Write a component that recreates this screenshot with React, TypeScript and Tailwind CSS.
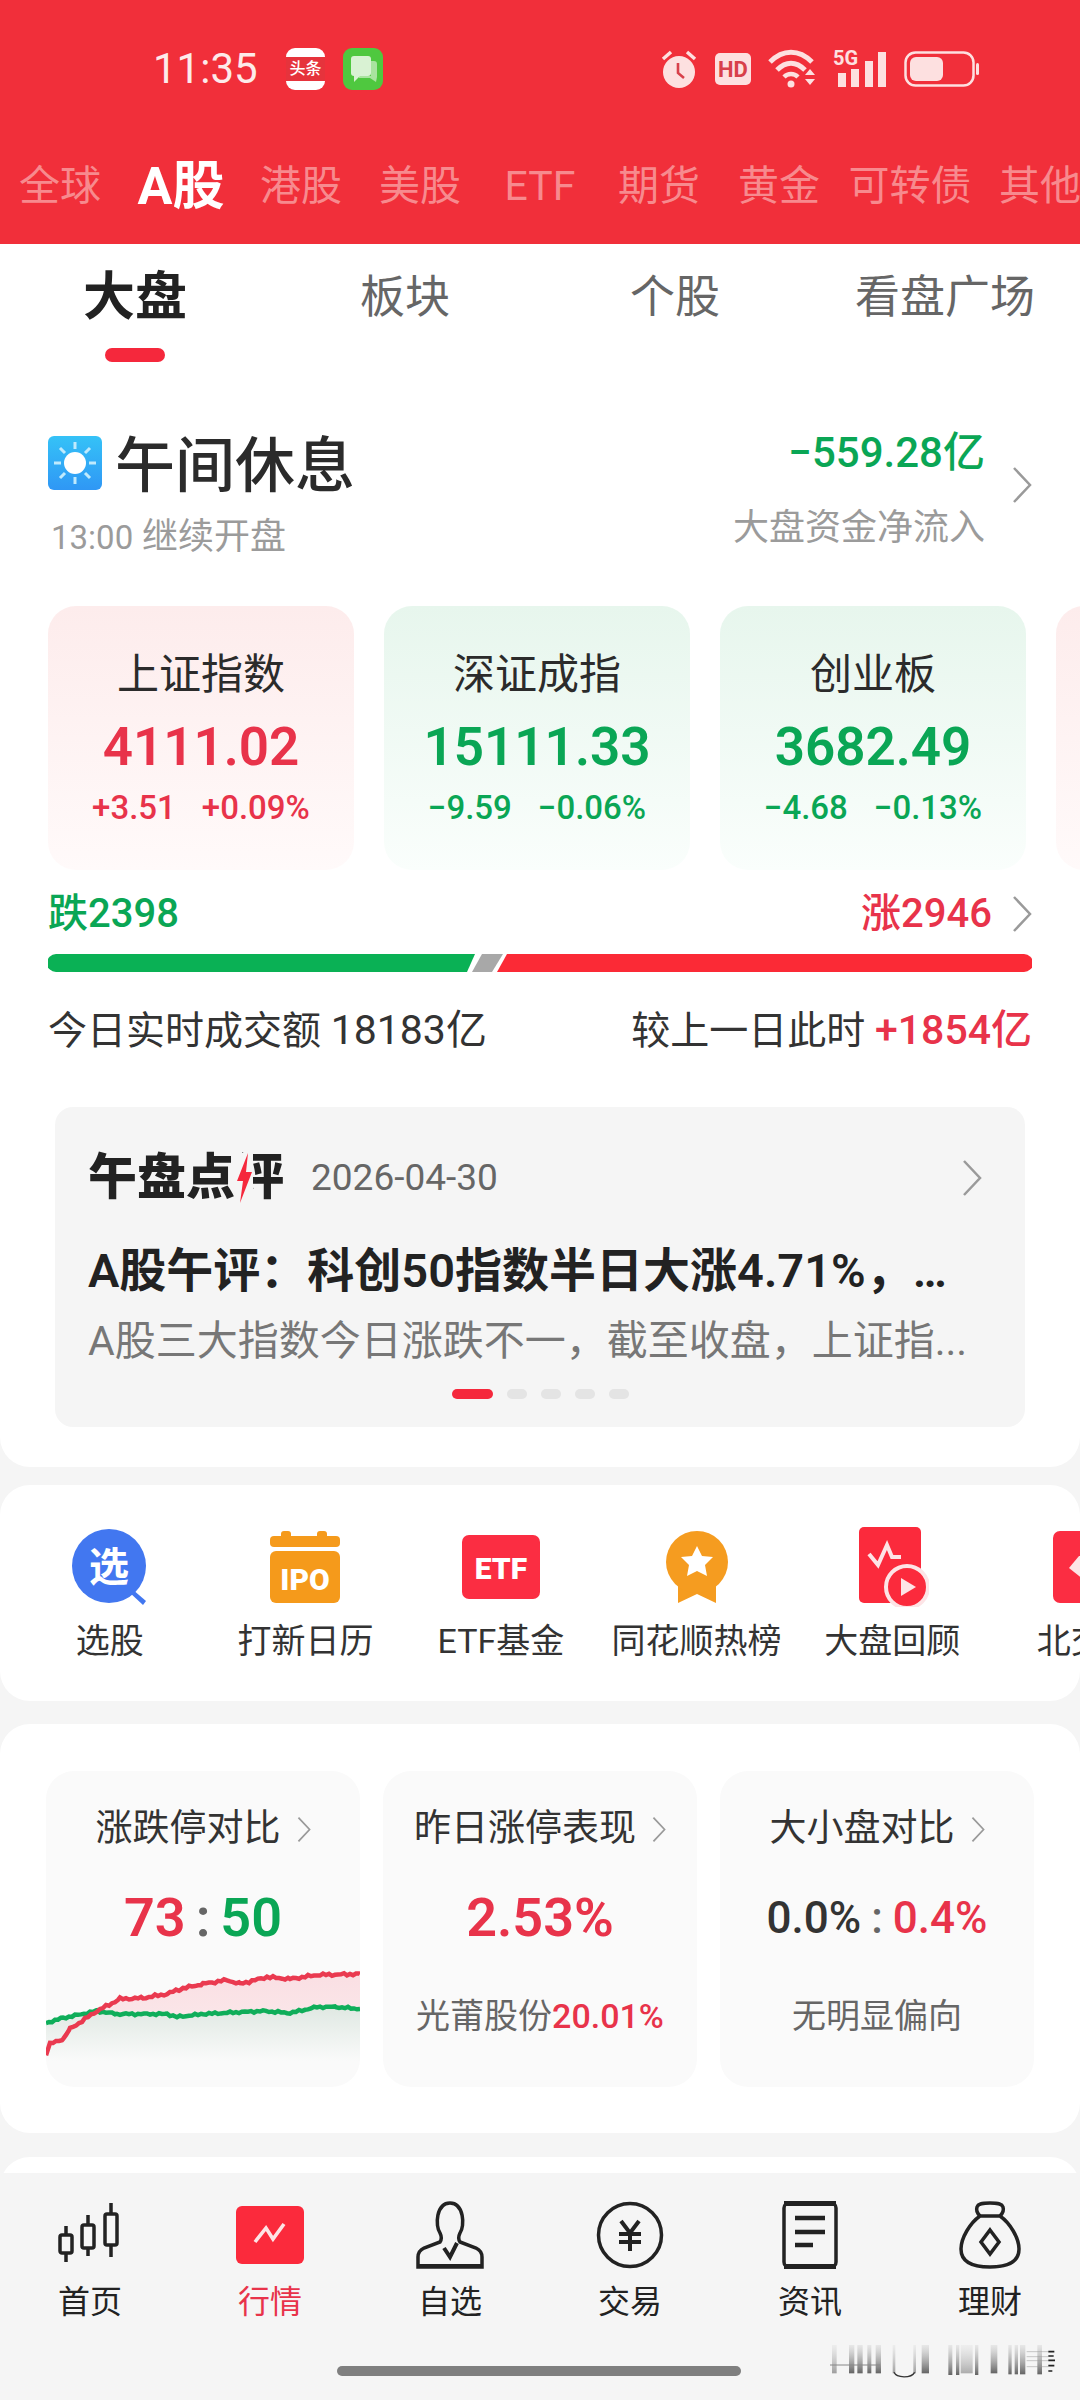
import React from "react";

const RED = "#e8334a";
const GREEN = "#0aa655";

const Chevron = ({ className = "" }: { className?: string }) => (
  <svg viewBox="0 0 20 36" className={className} fill="none" stroke="#9a9a9a" strokeWidth="2.5">
    <path d="M2 1l16 17L2 35" />
  </svg>
);

// status bar
const StatusIcons = () => (
  <div className="flex items-center ml-auto pr-[100px]">
    <svg viewBox="0 0 36 40" className="w-[36px] h-[40px]">
      <circle cx="18" cy="23" r="16" fill="#fde0e0" />
      <path d="M17 14v10l6 5" stroke="#d8404a" strokeWidth="2.6" fill="none" />
      <path d="M2 10l8-7M34 10l-8-7" stroke="#fde0e0" strokeWidth="3.5" />
    </svg>
    <svg viewBox="0 0 36 32" className="w-[36px] h-[32px] ml-[18px]">
      <rect width="36" height="32" rx="5" fill="#fde0e0" />
      <text x="18" y="24" textAnchor="middle" fontSize="22" fontWeight="700" fill="#d8404a" fontFamily="Roboto">HD</text>
    </svg>
    <svg viewBox="0 0 48 40" className="w-[48px] h-[40px] ml-[17px]">
      <path d="M2 13C15 0 31 0 44 13" stroke="#fde0e0" strokeWidth="5" fill="none" />
      <path d="M9 21C18 12 28 12 37 21" stroke="#fde0e0" strokeWidth="5" fill="none" />
      <path d="M16 28C20 24 26 24 30 28" stroke="#fde0e0" strokeWidth="4.5" fill="none" />
      <circle cx="23" cy="35" r="3.5" fill="#fde0e0" />
      <path d="M37 26l5-6 5 6zM37 30h10l-5 6z" fill="#fde0e0" />
    </svg>
    <div className="relative w-[54px] h-[40px] ml-[17px]">
      <span className="absolute left-0 -top-[2px] text-[20px] leading-[22px] font-bold text-[#fde0e0]">5G</span>
      <svg viewBox="0 0 54 40" className="w-[54px] h-[40px]">
        <rect x="5" y="24" width="8" height="14" fill="#fde0e0" />
        <rect x="18" y="20" width="8" height="18" fill="#fde0e0" />
        <rect x="32" y="12" width="8" height="26" fill="#fde0e0" />
        <rect x="45" y="3" width="8" height="35" fill="#fde0e0" />
      </svg>
    </div>
    <svg viewBox="0 0 76 36" className="w-[76px] h-[36px] ml-[17px]">
      <rect x="1.5" y="1.5" width="68" height="33" rx="10" fill="none" stroke="#fde0e0" strokeWidth="2.5" />
      <rect x="6" y="6" width="33" height="24" rx="6" fill="#fde0e0" />
      <rect x="72" y="12" width="3" height="12" rx="1.5" fill="#fde0e0" />
    </svg>
  </div>
);

const topTabs = [
  { name: "全球", w: "w-[120px]" },
  { name: "A股", w: "w-[122px]", active: true },
  { name: "港股", w: "w-[118px]" },
  { name: "美股", w: "w-[120px]" },
  { name: "ETF", w: "w-[120px]" },
  { name: "期货", w: "w-[118px]" },
  { name: "黄金", w: "w-[122px]" },
  { name: "可转债", w: "w-[140px]" },
  { name: "其他", w: "w-[120px]" },
];

const indexCards = [
  { name: "上证指数", value: "4111.02", a: "+3.51", b: "+0.09%", up: true },
  { name: "深证成指", value: "15111.33", a: "−9.59", b: "−0.06%", up: false },
  { name: "创业板", value: "3682.49", a: "−4.68", b: "−0.13%", up: false },
  { name: "", value: "", a: "", b: "", up: true },
];

const Shortcut = ({ label, children }: { label: string; children: React.ReactNode }) => (
  <div className="w-[195.6px] shrink-0 flex flex-col items-center">
    <div className="h-[80px] flex items-center justify-center">{children}</div>
    <div className="mt-[12px] text-[34px] leading-[44px] text-[#333] whitespace-nowrap">{label}</div>
  </div>
);

// noisy line between anchor points, seeded by a phase so it stays the same each render
const noisyPath = (pts: number[][], amp: number, phase: number) => {
  const out: string[] = [];
  for (let i = 0; i < pts.length - 1; i++) {
    const [x0, y0] = pts[i];
    const [x1, y1] = pts[i + 1];
    for (let x = x0; x < x1; x += 3) {
      const y = y0 + ((y1 - y0) * (x - x0)) / (x1 - x0);
      const n = Math.sin(x * 0.9 + phase) * amp + Math.sin(x * 0.37 + phase * 2) * amp * 0.7;
      out.push(`${x} ${(y + n).toFixed(1)}`);
    }
  }
  const last = pts[pts.length - 1];
  out.push(`${last[0]} ${last[1]}`);
  return out;
};

// chart coords: x from card left, y from the top of the svg (page y 1960)
const redPts = [[0, 93], [4, 83], [17, 78], [24, 68], [51, 50], [74, 38], [97, 37], [121, 33], [134, 28], [157, 23], [181, 19], [194, 23], [221, 16], [244, 18], [271, 14], [314, 13]];
const greenPts = [[0, 62], [17, 57], [51, 50], [71, 53], [121, 53], [131, 56], [157, 53], [217, 50], [244, 52], [271, 46], [290, 46], [314, 48]];

const LimitChart = () => {
  const red = noisyPath(redPts, 0.9, 1);
  const green = noisyPath(greenPts, 0.7, 3);
  const redD = "M" + red.join(" L");
  const greenD = "M" + green.join(" L");
  const greenRev = [...green].reverse().join(" L");
  return (
    <svg viewBox="0 0 314 126" className="w-full h-[126px] mt-[13px] block">
      <defs>
        <linearGradient id="gf" x1="0" y1="0" x2="0" y2="1">
          <stop offset="0" stopColor="#dfe8e2" />
          <stop offset="1" stopColor="#fafafa" />
        </linearGradient>
        <linearGradient id="rf" x1="0" y1="0" x2="0" y2="1">
          <stop offset="0" stopColor="#fadfe3" />
          <stop offset="1" stopColor="#fbecee" />
        </linearGradient>
        <clipPath id="rc"><rect x="51" y="0" width="263" height="126" /></clipPath>
      </defs>
      <path d={`${greenD} L314 100 L0 100 Z`} fill="url(#gf)" />
      <path d={`${redD} L${greenRev} Z`} fill="url(#rf)" clipPath="url(#rc)" />
      <path d={greenD} fill="none" stroke="#0fae5a" strokeWidth="4.5" />
      <path d={redD} fill="none" stroke="#ea3a50" strokeWidth="4.5" />
    </svg>
  );
};

const navItems = [
  {
    label: "首页",
    icon: (
      <svg viewBox="0 0 64 64" className="w-[64px] h-[64px]" fill="none" stroke="#222" strokeWidth="3.5">
        <path d="M8 23v9M8 50v9M30 12v10M30 45v8M53 0v11M53 42v12" />
        <rect x="2" y="32" width="12" height="18" rx="2" />
        <rect x="24" y="22" width="12" height="23" rx="2" />
        <rect x="47" y="11" width="12" height="31" rx="2" />
      </svg>
    ),
  },
  {
    label: "行情",
    active: true,
    icon: (
      <svg viewBox="0 0 68 58" className="w-[68px] h-[58px]">
        <rect width="68" height="58" rx="6" fill="#fb2a3c" />
        <path d="M19 36l11-14 7 11 11-15" fill="none" stroke="#fde4e6" strokeWidth="3.6" />
      </svg>
    ),
  },
  {
    label: "自选",
    icon: (
      <svg viewBox="0 0 68 68" className="w-[68px] h-[68px]" fill="none" stroke="#222" strokeWidth="3.5">
        <path d="M24 32C19 25 20 2 34 2s15 23 10 30c-2 4-2 6 0 9l16 6c4 2 6 5 6 9v10H2V56c0-4 2-7 6-9l16-6c2-3 2-5 0-9z" />
        <path d="M2 65h64" strokeWidth="4" />
        <path d="M28 47l6 9 7-14" strokeWidth="4" />
      </svg>
    ),
  },
  {
    label: "交易",
    icon: (
      <svg viewBox="0 0 68 68" className="w-[68px] h-[68px]" fill="none" stroke="#222" strokeWidth="3.5">
        <circle cx="34" cy="34" r="31.5" />
        <path d="M25 20l9 12 9-12M34 32v18M23 33h22M23 41h22" strokeWidth="4" />
      </svg>
    ),
  },
  {
    label: "资讯",
    icon: (
      <svg viewBox="0 0 56 68" className="w-[56px] h-[68px]" fill="none" stroke="#222" strokeWidth="3.5">
        <rect x="2" y="2" width="52" height="64" rx="5" />
        <path d="M2 2.500h52M2 65.500h52" strokeWidth="5" />
        <path d="M13 17h30M13 31h30" strokeWidth="4.5" />
        <path d="M13 44h18" strokeWidth="4.5" />
      </svg>
    ),
  },
  {
    label: "理财",
    icon: (
      <svg viewBox="0 0 62 68" className="w-[62px] h-[68px]" fill="none" stroke="#222" strokeWidth="3.5">
        <path d="M21 15c-3-3-4-6-3-9 1-3 4-4 13-4s12 1 13 4c1 3 0 6-3 9" />
        <path d="M21 15h20c10 7 19 22 19 33 0 12-9 18-29 18S2 60 2 48c0-11 9-26 19-33z" />
        <path d="M31 29l9 12-9 12-9-12z" />
      </svg>
    ),
  },
];

export default function App() {
  return (
    <div className="w-[1080px] h-[2400px] overflow-hidden relative flex flex-col bg-[#f5f5f5] [font-family:Roboto,'Noto_Sans_CJK_SC',sans-serif]">
      <div className="flex-1 min-h-0 overflow-hidden">
        {/* Red header */}
        <div className="h-[244px] bg-[#f12f3a]">
          <div className="h-[138px] flex items-center pl-[153px]">
            <span className="text-[42px] leading-none text-[#fdeaea] w-[105px]">11:35</span>
            <div className="ml-[28px] w-[39px] h-[42px] rounded-[9px] bg-white overflow-hidden flex items-center">
              <div className="w-full h-[24px] bg-[#e6333c] text-white text-[16px] leading-[24px] text-center font-medium whitespace-nowrap">头条</div>
            </div>
            <svg viewBox="0 0 40 42" className="ml-[18px] w-[40px] h-[42px]">
              <rect width="40" height="42" rx="9" fill="#4fc83f" />
              <rect x="8" y="8" width="20" height="20" rx="3" fill="#d9f2d3" />
              <path d="M28 13h3c2 0 3 1 3 3v13l-1 5-6-4H16v-2h12z" fill="#a9e39f" />
              <path d="M11 28v6l6-6z" fill="#d9f2d3" />
            </svg>
            <StatusIcons />
          </div>
          <div className="h-[98px] flex items-center overflow-hidden">
            {topTabs.map((t) => (
              <div key={t.name} className={`${t.w} shrink-0 text-center whitespace-nowrap ${t.active ? "text-[52px] font-bold text-white" : "text-[41px] text-[#f78a8e]"}`}>
                {t.name}
              </div>
            ))}
          </div>
        </div>

        {/* Main white card */}
        <div className="bg-white rounded-b-[30px] pb-[40px]">
          <div className="grid grid-cols-4 h-[118px]">
            <div className="flex flex-col items-center">
              <div className="mt-[24px] text-[52px] leading-[60px] font-bold text-[#222]">大盘</div>
              <div className="mt-[20px] w-[60px] h-[14px] rounded-full bg-[#f5283c]"></div>
            </div>
            {["板块", "个股", "看盘广场"].map((t) => (
              <div key={t} className="mt-[24px] text-[45px] leading-[60px] text-[#666] text-center">{t}</div>
            ))}
          </div>

          {/* Market status */}
          <div className="flex justify-between px-[48px] pt-[68px] h-[244px]">
            <div>
              <div className="flex items-center h-[74px]">
                <svg viewBox="0 0 54 54" className="w-[54px] h-[54px] -mt-[8px]">
                  <defs>
                    <linearGradient id="sky" x1="0" y1="0" x2="0" y2="1">
                      <stop offset="0" stopColor="#35c2f7" />
                      <stop offset="1" stopColor="#2f97f5" />
                    </linearGradient>
                  </defs>
                  <rect width="54" height="54" rx="6" fill="url(#sky)" />
                  <circle cx="27" cy="27" r="11" fill="#fff" />
                  <path d="M27 6v7M27 41v7M6 27h7M41 27h7M12 12l5 5M42 12l-5 5M12 42l5-5M42 42l-5-5" stroke="#bfeafd" strokeWidth="3" />
                </svg>
                <span className="ml-[13px] text-[60px] leading-[74px] font-medium text-[#2b2b2b]">午间休息</span>
              </div>
              <div className="mt-[13px] pl-[3px] text-[36px] leading-[40px] text-[#9b9b9b]">
                <span className="text-[33px]">13:00</span> 继续开盘
              </div>
            </div>
            <div className="flex items-start">
              <div className="text-right -mt-[2px]">
                <div className="text-[42px] leading-[50px] font-medium text-[#0aa655]">−559.28亿</div>
                <div className="mt-[30px] text-[36px] leading-[40px] text-[#9b9b9b]">大盘资金净流入</div>
              </div>
              <Chevron className="w-[20px] h-[36px] ml-[27px] mt-[37px]" />
            </div>
          </div>

          {/* Index cards */}
          <div className="flex gap-[30px] pl-[48px] overflow-hidden">
            {indexCards.map((c, i) => (
              <div key={i} className={`w-[306px] h-[264px] shrink-0 rounded-[28px] pt-[44px] text-center bg-gradient-to-b ${c.up ? "from-[#fdecec] to-[#fffafa]" : "from-[#e7f6ed] to-[#fafefc]"}`}>
                <div className="h-[50px] text-[42px] leading-[50px] text-[#2b2b2b]">{c.name}</div>
                <div className="mt-[15px] h-[64px] text-[53px] leading-[64px] font-semibold" style={{ color: c.up ? RED : GREEN }}>{c.value}</div>
                <div className="mt-[9px] flex justify-center gap-[26px] text-[33px] leading-[40px] font-medium" style={{ color: c.up ? RED : GREEN }}>
                  <span>{c.a}</span>
                  <span>{c.b}</span>
                </div>
              </div>
            ))}
          </div>

          {/* Rise / fall */}
          <div className="mt-[19px] px-[48px] flex items-center justify-between h-[50px]">
            <span className="text-[40px] font-medium text-[#0aa655]">跌2398</span>
            <div className="flex items-center">
              <span className="text-[40px] font-medium text-[#e8334a]">涨2946</span>
              <Chevron className="w-[20px] h-[36px] ml-[20px]" />
            </div>
          </div>
          <div className="mt-[15px] px-[48px]">
            <svg viewBox="0 0 984 18" className="w-[984px] h-[18px] block">
              <path d="M8 0H427L419 18H8A8 8 0 0 1 8 0Z" fill="#0ab155" />
              <path d="M434 0H455L444 18H424Z" fill="#a8a8a8" />
              <path d="M459 0H976A8 8 0 0 1 976 18H449Z" fill="#fb2a36" />
            </svg>
          </div>
          <div className="mt-[36px] px-[48px] flex justify-between text-[39px] leading-[44px] text-[#333]">
            <span>今日实时成交额 <span className="text-[41px]">18183亿</span></span>
            <span>较上一日此时 <span className="text-[41px] text-[#e8334a] font-medium">+1854亿</span></span>
          </div>

          {/* Noon review */}
          <div className="mt-[54px] mx-[55px] h-[320px] rounded-[18px] bg-[#f5f5f5] px-[33px] pt-[46px]">
            <div className="flex items-center h-[50px]">
              <div className="relative w-[197px] text-[49px] leading-[50px] font-black text-[#222] whitespace-nowrap">
                午盘点评
                <svg viewBox="0 0 18 50" className="absolute left-[147px] top-0 w-[18px] h-[50px]">
                  <rect width="18" height="50" fill="#f5f5f5" />
                  <path d="M13 0L2 28h6L5 50 17 19h-6z" fill="#f5283c" />
                </svg>
              </div>
              <span className="ml-[26px] text-[37px] text-[#666]">2026-04-30</span>
              <Chevron className="w-[20px] h-[38px] ml-auto mr-[10px]" />
            </div>
            <div className="mt-[40px] text-[47px] leading-[56px] font-semibold text-[#222] whitespace-nowrap">A股午评：科创50指数半日大涨4.71%，…</div>
            <div className="mt-[17px] text-[41px] leading-[50px] text-[#777] whitespace-nowrap">A股三大指数今日涨跌不一，截至收盘，上证指...</div>
            <div className="mt-[23px] flex justify-center gap-[14px]">
              <div className="w-[41px] h-[10px] rounded-full bg-[#f5283c]"></div>
              <div className="w-[20px] h-[10px] rounded-full bg-[#e4e4e4]"></div>
              <div className="w-[20px] h-[10px] rounded-full bg-[#e4e4e4]"></div>
              <div className="w-[20px] h-[10px] rounded-full bg-[#e4e4e4]"></div>
              <div className="w-[20px] h-[10px] rounded-full bg-[#e4e4e4]"></div>
            </div>
          </div>
        </div>

        {/* Shortcuts */}
        <div className="mt-[18px] h-[216px] bg-white rounded-[30px] pt-[42px] pl-[12px] flex overflow-hidden">
          <Shortcut label="选股">
            <svg viewBox="0 0 76 76" className="w-[76px] h-[76px]">
              <path d="M60 60l14 12-3 4-14-13z" fill="#4277f0" />
              <circle cx="37" cy="37" r="37" fill="#4277f0" />
              <text x="37" y="52" textAnchor="middle" fontSize="40" fontWeight="700" fill="#fff" fontFamily="Noto Sans CJK SC">选</text>
            </svg>
          </Shortcut>
          <Shortcut label="打新日历">
            <svg viewBox="0 0 70 72" className="w-[70px] h-[72px]">
              <rect x="11" y="0" width="10" height="10" rx="3" fill="#f59a1b" />
              <rect x="47" y="0" width="10" height="10" rx="3" fill="#f59a1b" />
              <rect x="0" y="5" width="70" height="11" rx="4" fill="#f59a1b" />
              <rect x="0" y="20" width="70" height="52" rx="6" fill="#f59a1b" />
              <text x="35" y="59" textAnchor="middle" fontSize="30" fontWeight="900" fill="#fff" fontFamily="Roboto">IPO</text>
            </svg>
          </Shortcut>
          <Shortcut label="ETF基金">
            <svg viewBox="0 0 78 64" className="w-[78px] h-[64px]">
              <rect width="78" height="64" rx="7" fill="#fb2d42" />
              <text x="39" y="44" textAnchor="middle" fontSize="30" fontWeight="900" fill="#fff" fontFamily="Roboto">ETF</text>
            </svg>
          </Shortcut>
          <Shortcut label="同花顺热榜">
            <svg viewBox="0 0 62 72" className="w-[62px] h-[72px]">
              <path d="M12 42v30l19-9 19 9V42z" fill="#f59c20" />
              <circle cx="31" cy="31" r="31" fill="#f59c20" />
              <path d="M31 15l5 10 11 1-8 8 2 11-10-5-10 5 2-11-8-8 11-1z" fill="#fff" />
            </svg>
          </Shortcut>
          <Shortcut label="大盘回顾">
            <svg viewBox="0 0 70 80" className="w-[70px] h-[80px] translate-x-[2px]">
              <rect width="62" height="76" rx="5" fill="#fb2a3c" />
              <path d="M10 27l9 11 9-20 5 12h9" fill="none" stroke="#fde4e6" strokeWidth="4" />
              <circle cx="48" cy="60" r="21" fill="#fb2a3c" stroke="#fde4e6" strokeWidth="4" />
              <path d="M42 51l15 9-15 9z" fill="#fde4e6" />
            </svg>
          </Shortcut>
          <Shortcut label="北交所">
            <svg viewBox="0 0 70 72" className="w-[70px] h-[72px]">
              <rect width="70" height="72" rx="7" fill="#fb2d42" />
              <path d="M16 37l10-12h30l10 12-25 20z" fill="#fde4e6" />
            </svg>
          </Shortcut>
        </div>

        {/* Stat cards */}
        <div className="mt-[23px] h-[409px] bg-white rounded-[30px] pt-[47px] px-[46px] grid grid-cols-3 gap-[23px]">
          <div className="h-[316px] rounded-[28px] bg-[#fafafa] overflow-hidden pt-[36px] text-center">
            <div className="flex items-center justify-center gap-[16px] text-[37px] leading-[44px] text-[#333]">
              涨跌停对比
              <Chevron className="w-[14px] h-[25px]" />
            </div>
            <div className="mt-[37px] text-[54px] leading-[60px] font-semibold whitespace-nowrap">
              <span className="text-[#e8334a]">73</span>
              <span className="text-[#666] mx-[10px]">:</span>
              <span className="text-[#0aa655]">50</span>
            </div>
            <LimitChart />
          </div>
          <div className="h-[316px] rounded-[28px] bg-[#fafafa] pt-[36px] text-center">
            <div className="flex items-center justify-center gap-[16px] text-[37px] leading-[44px] text-[#333]">
              昨日涨停表现
              <Chevron className="w-[14px] h-[25px]" />
            </div>
            <div className="mt-[37px] text-[54px] leading-[60px] font-semibold text-[#e8334a]">2.53%</div>
            <div className="mt-[46px] text-[34px] leading-[44px] text-[#666] whitespace-nowrap">
              光莆股份<span className="text-[#e8334a] font-medium">20.01%</span>
            </div>
          </div>
          <div className="h-[316px] rounded-[28px] bg-[#fafafa] pt-[36px] text-center">
            <div className="flex items-center justify-center gap-[16px] text-[37px] leading-[44px] text-[#333]">
              大小盘对比
              <Chevron className="w-[14px] h-[25px]" />
            </div>
            <div className="mt-[37px] text-[44px] leading-[60px] font-medium whitespace-nowrap">
              <span className="text-[#333]">0.0%</span>
              <span className="text-[#666] mx-[10px]">:</span>
              <span className="text-[#e8334a]">0.4%</span>
            </div>
            <div className="mt-[46px] text-[34px] leading-[44px] text-[#666]">无明显偏向</div>
          </div>
        </div>

        {/* Next card, cut off by the tab bar */}
        <div className="mt-[24px] h-[60px] bg-white rounded-t-[30px]"></div>
      </div>

      {/* Bottom nav */}
      <div className="h-[227px] shrink-0 bg-[#f5f5f5] pt-[27px]">
        <div className="grid grid-cols-6">
          {navItems.map((n) => (
            <div key={n.label} className="flex flex-col items-center">
              <div className="h-[70px] flex items-center justify-center">{n.icon}</div>
              <div className={`mt-[12px] text-[32px] leading-[40px] ${n.active ? "text-[#e8334a]" : "text-[#222]"}`}>{n.label}</div>
            </div>
          ))}
        </div>
        <div className="mt-[44px] mx-auto w-[404px] h-[10px] rounded-full bg-[#7f7f7f] -translate-x-px"></div>
      </div>

      {/* Smeared watermark over the corner */}
      <svg viewBox="0 0 750 165" className="absolute left-[820px] top-[2335px] w-[250px] h-[55px]" fill="none">
        <defs>
          <linearGradient id="wm" x1="0" y1="0" x2="0" y2="1">
            <stop offset="0" stopColor="#999" stopOpacity="0.15" />
            <stop offset="1" stopColor="#333" stopOpacity="0.75" />
          </linearGradient>
        </defs>
        <g fill="url(#wm)">
          <rect x="36" y="30" width="14" height="85" opacity="0.6" />
          <rect x="87" y="30" width="16" height="85" />
          <rect x="112" y="30" width="16" height="85" />
          <rect x="142" y="30" width="12" height="85" />
          <rect x="167" y="30" width="16" height="85" />
          <rect x="218" y="30" width="8" height="85" opacity="0.6" />
          <rect x="280" y="30" width="8" height="85" opacity="0.6" />
          <rect x="305" y="30" width="22" height="85" />
          <rect x="385" y="30" width="12" height="90" />
          <rect x="408" y="30" width="10" height="90" />
          <rect x="422" y="30" width="36" height="85" opacity="0.5" />
          <rect x="465" y="30" width="10" height="90" />
          <rect x="512" y="30" width="20" height="85" />
          <rect x="565" y="30" width="10" height="88" />
          <rect x="584" y="30" width="10" height="88" />
          <rect x="600" y="30" width="16" height="88" />
          <rect x="652" y="30" width="14" height="88" />
        </g>
        <path d="M30 90H180" stroke="#888" strokeWidth="3" />
        <path d="M222 112c8 18 52 18 62 0" stroke="#333" strokeWidth="4" />
        <path d="M620 50h65M620 65h65M620 77h65M620 95h65" stroke="#999" strokeWidth="3" opacity="0.5" />
        <path d="M685 50h18M685 63h16M685 76h20M685 92h18M685 108h12" stroke="#222" strokeWidth="5" />
      </svg>
    </div>
  );
}
